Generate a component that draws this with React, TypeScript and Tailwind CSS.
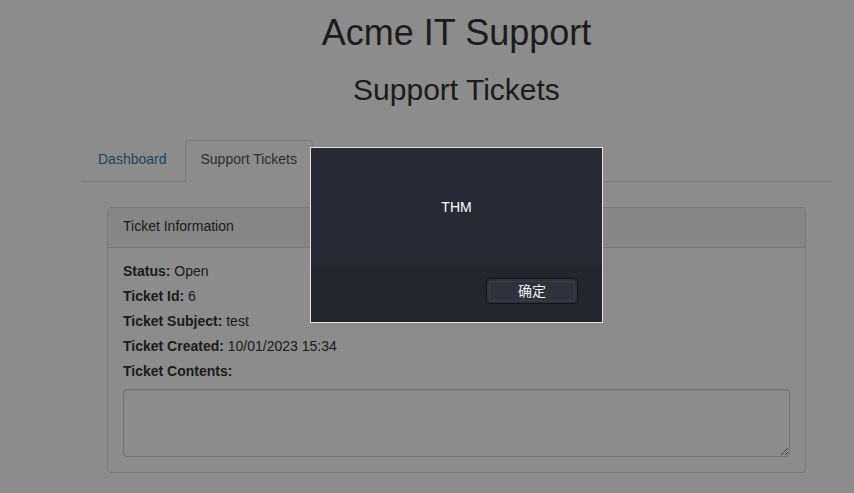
import type { JSX } from "react";

const rows = [
    { label: "Status:", value: "Open" },
    { label: "Ticket Id:", value: "6" },
    { label: "Ticket Subject:", value: "test" },
    { label: "Ticket Created:", value: "10/01/2023 15:34" },
];

function TicketPanel(): JSX.Element {
    return (
        <div className="mt-[25px] mx-[26px] border border-[#ddd] rounded-[4px] bg-white">
            {/* Heading */}
            <div className="h-[40px] px-[15px] pb-[2px] flex items-center bg-[#f5f5f5] border-b border-[#ddd] rounded-t-[3px]">
                Ticket Information
            </div>

            {/* Body */}
            <div className="px-[15px] pt-[13px] pb-[15px]">
                {rows.map((row, index) => (
                    <div key={index} className="h-[25px] leading-[20px]">
                        <b>{row.label}</b> {row.value}
                    </div>
                ))}
                <div className="h-[25px] leading-[20px]">
                    <b>Ticket Contents:</b>
                </div>
                <textarea
                    className="mt-[3px] block w-full h-[68px] border border-[#ccc] rounded-[4px] shadow-[inset_0_1px_1px_rgba(0,0,0,0.075)] resize-y"
                    readOnly
                />
            </div>
        </div>
    );
}

function AlertDialog(): JSX.Element {
    return (
        <div className="absolute left-[310px] top-[147px] w-[293px] h-[176px] border border-[#e4e4e4] bg-[#272a35] flex flex-col font-['Liberation_Sans','Noto_Sans_CJK_SC',sans-serif]">
            <div className="h-[117px] flex justify-center pt-[49px] text-[14px] text-white">
                THM
            </div>
            <div className="flex-1 bg-[#23252f] flex justify-end items-start pt-[13px] pr-[24px]">
                <button className="w-[92px] h-[26px] rounded-[4px] border border-[#111217] bg-[#2f323d] p-[2px]">
                    <span className="flex h-full w-full items-center justify-center rounded-[2px] border border-[#3a3d49] text-[14px] text-[#eef0f5]">
                        确定
                    </span>
                </button>
            </div>
        </div>
    );
}

export default function App() {
    return (
        <div className="relative w-full h-[493px] overflow-hidden bg-white text-[14px] text-[#333] font-['Liberation_Sans',Arial,sans-serif]">
            <div className="ml-[81px] w-[751px]">
                <h1 className="pt-[13px] text-center text-[36px] leading-[1.1]">Acme IT Support</h1>
                <h2 className="mt-[20px] text-center text-[30px] leading-[1.1]">Support Tickets</h2>

                {/* Tabs */}
                <ul className="mt-[34px] flex border-b border-[#ddd] pl-[1px]">
                    <li className="-mb-px mr-[2px]">
                        <a className="block px-[15px] pt-[8px] pb-[12px] leading-[20px] border border-transparent rounded-t-[4px] text-[#337ab7]">
                            Dashboard
                        </a>
                    </li>
                    <li className="-mb-px mr-[2px]">
                        <a className="block px-[15px] pt-[8px] pb-[12px] leading-[20px] border border-[#ddd] border-b-transparent rounded-t-[4px] bg-white text-[#555]">
                            Support Tickets
                        </a>
                    </li>
                </ul>

                <TicketPanel />
            </div>

            {/* Overlay */}
            <div className="absolute inset-0 bg-[rgba(0,0,0,0.45)]" />

            <AlertDialog />
        </div>
    );
}
